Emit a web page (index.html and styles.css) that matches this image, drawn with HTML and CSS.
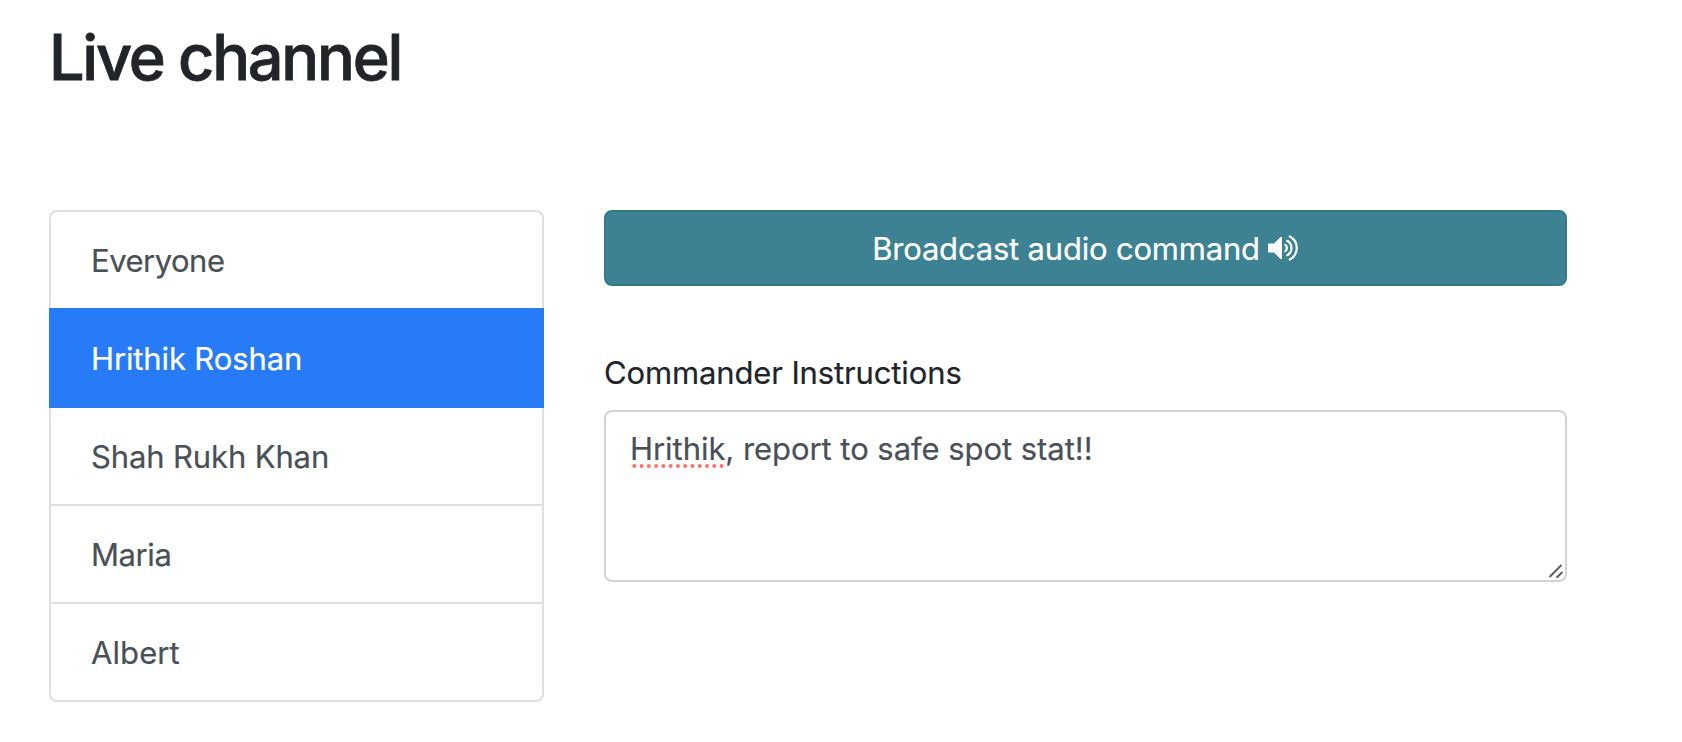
FILE: index.html
```html
<!DOCTYPE html>
<html lang="en">
<head>
<meta charset="utf-8">
<title>Live channel</title>
<link rel="stylesheet" href="styles.css">
</head>
<body>
<main class="page">
  <h1 class="title">Live channel</h1>
  <div class="columns">
    <ul class="members">
      <li class="member"><span class="tighter">Everyone</span></li>
      <li class="member active"><span>Hrithik Roshan</span></li>
      <li class="member"><span>Shah Rukh Khan</span></li>
      <li class="member"><span class="tight">Maria</span></li>
      <li class="member"><span class="loose">Albert</span></li>
    </ul>
    <section class="panel">
      <button class="broadcast" type="button">
        <span>Broadcast audio command</span>
        <svg class="speaker" width="32" height="28" viewBox="0 0 32 28" fill="none" stroke="#fff" stroke-width="2.200" stroke-linecap="round">
          <path d="M2 9.500h5l6-6Q14.800 2 15 4v20q-.2 2-2 .5l-6-6H2q-1 0-1-1v-7q0-1 1-1z" fill="#fff" stroke="none"/>
          <path d="M18.300 10.800a4 4 0 0 1 0 6.400M20.300 6.800a8.300 8.300 0 0 1 0 14.400M22.800 2.500a13 13 0 0 1 0 23"/>
        </svg>
      </button>
      <div class="label">Commander Instructions</div>
      <div class="field">
        <span class="message"><span class="misspelled">Hrithik<svg class="dots" width="92" height="4" viewBox="0 0 92 4"><path d="M2.300 2H90" fill="none" stroke="#ff7168" stroke-width="4" stroke-linecap="round" stroke-dasharray="0 7.270"/></svg></span>, report to safe spot stat!!</span>
        <svg class="grip" width="16" height="16" viewBox="0 0 16 16" fill="none" stroke="#5e5e5e" stroke-width="2"><path d="M1.500 14 13.500 2M8.500 14.800 14.500 9"/></svg>
      </div>
    </section>
  </div>
</main>
</body>
</html>
```
FILE: styles.css
```css
* { box-sizing: border-box; }
body {
  margin: 0;
  background: #fff;
  color: #212529;
  font: 400 31px/48px Inter, "Liberation Sans", sans-serif;
  -webkit-text-stroke: 0.2px currentColor;
}
.page { padding: 19px 115px 0 49px; }
.title {
  margin: 0 0 115px;
  font-size: 63px;
  line-height: 76px;
  font-weight: 500;
  letter-spacing: -2.25px;
  -webkit-text-stroke: 0.8px currentColor;
}
.columns {
  display: grid;
  grid-template-columns: 495px 963px;
  column-gap: 60px;
  align-items: start;
}
.members {
  list-style: none;
  margin: 0;
  padding: 0;
  color: #495057;
  letter-spacing: -0.13px;
}
.member {
  height: 100px;
  margin-top: -2px;
  padding: 25px 40px 23px;
  border: 2px solid #dfdfdf;
}
.member:first-child { margin-top: 0; border-radius: 8px 8px 0 0; }
.member:last-child { border-radius: 0 0 8px 8px; }
.active {
  position: relative;
  color: #fff;
  background: #287bf7;
  border-color: #287bf7;
}
.member, .broadcast, .field { -webkit-text-stroke-color: currentColor; }
.tighter { letter-spacing: -0.5px; }
.tight { letter-spacing: -0.4px; }
.loose { letter-spacing: 0.1px; }
.panel { display: flex; flex-direction: column; }
.broadcast {
  display: flex;
  align-items: center;
  justify-content: center;
  gap: 7px;
  height: 76px;
  padding: 1px 0 0;
  border: 2px solid #357a89;
  border-radius: 8px;
  background: #3c8293;
  color: #fff;
  font: inherit;
  letter-spacing: -0.2px;
}
.speaker { margin-top: -1px; }
.label {
  height: 48px;
  margin: 63px 0 13px;
  letter-spacing: -0.13px;
}
.field {
  position: relative;
  height: 172px;
  padding: 13px 24px;
  border: 2px solid #ced4da;
  border-radius: 8px;
  color: #495057;
  letter-spacing: -0.05px;
}
.misspelled { position: relative; }
.dots { position: absolute; left: 2px; bottom: -1px; }
.grip { position: absolute; right: 1px; bottom: 1px; }
```
